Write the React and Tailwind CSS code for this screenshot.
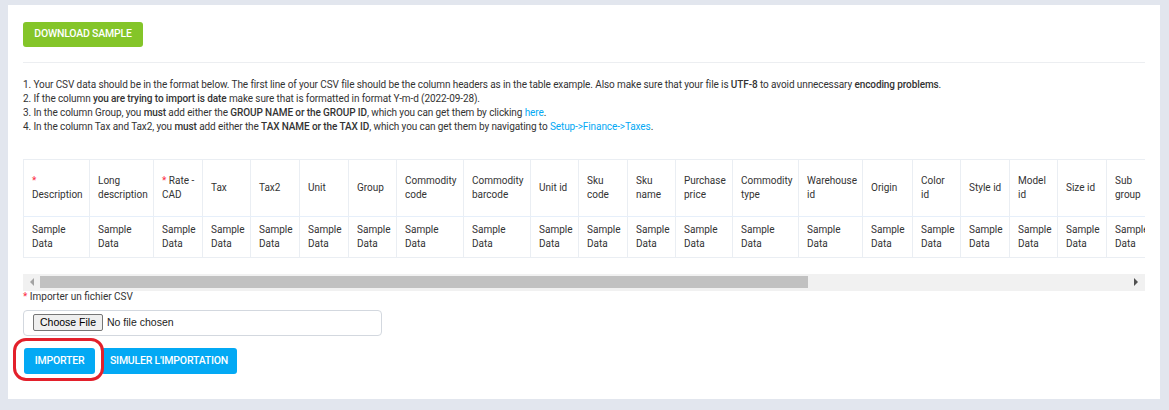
import React from "react";

const Star = () => <span className="text-[#fc2d42]">*</span>;

const cols = [
  { w: 66, h: <><Star /><br />Description</> },
  { w: 64, h: <>Long<br />description</> },
  { w: 49, h: <><Star /> Rate -<br />CAD</> },
  { w: 48, h: <>Tax</> },
  { w: 49, h: <>Tax2</> },
  { w: 49, h: <>Unit</> },
  { w: 48, h: <>Group</> },
  { w: 67, h: <>Commodity<br />code</> },
  { w: 67, h: <>Commodity<br />barcode</> },
  { w: 48, h: <>Unit id</> },
  { w: 49, h: <>Sku<br />code</> },
  { w: 48, h: <>Sku<br />name</> },
  { w: 57, h: <>Purchase<br />price</> },
  { w: 66, h: <>Commodity<br />type</> },
  { w: 64, h: <>Warehouse<br />id</> },
  { w: 50, h: <>Origin</> },
  { w: 48, h: <>Color<br />id</> },
  { w: 49, h: <>Style id</> },
  { w: 48, h: <>Model<br />id</> },
  { w: 49, h: <>Size id</> },
  { w: 52, h: <>Sub<br />group</> },
];

export default function App() {
  return (
    <div
      className="min-h-[410px] w-[1169px] bg-[#e2e6ee] pt-[5px] pl-[8px] pr-[9px] pb-[11px]"
      style={{ fontFamily: "Roboto, 'Liberation Sans', sans-serif" }}
    >
      <div className="bg-white h-[394px] pt-[15px] px-[15px] relative">
        <button className="h-[25px] w-[120px] rounded-[3px] bg-[#84c529] text-white text-[10.5px] font-medium uppercase tracking-[-0.2px] leading-none">
          Download Sample
        </button>
        <div className="mt-[15px] h-px bg-[#eceef1]" />
        <div className="mt-[15px] text-[10px] leading-[14px] text-[#333] tracking-[-0.1px]">
          <div>
            1. Your CSV data should be in the format below. The first line of your CSV file should be the column headers as in the table example. Also make sure that your file is <span className="font-medium">UTF-8</span> to avoid unnecessary <span className="font-medium">encoding problems</span>.
          </div>
          <div>
            2. If the column <span className="font-medium">you are trying to import is date</span> make sure that is formatted in format Y-m-d (2022-09-28).
          </div>
          <div>
            3. In the column Group, you <span className="font-medium">must</span> add either the <span className="font-medium">GROUP NAME or the GROUP ID</span>, which you can get them by clicking <span className="text-[#03a9f4]">here</span>.
          </div>
          <div>
            4. In the column Tax and Tax2, you <span className="font-medium">must</span> add either the <span className="font-medium">TAX NAME or the TAX ID</span>, which you can get them by navigating to <span className="text-[#03a9f4]">Setup-&gt;Finance-&gt;Taxes</span>.
          </div>
        </div>

        <div className="mt-[25px] w-[1122px] overflow-hidden">
          <table className="table-fixed border-collapse text-[10px] leading-[14px] text-[#333]" style={{ width: cols.reduce((a, c) => a + c.w, 0) }}>
            <colgroup>
              {cols.map((c, i) => (
                <col key={i} style={{ width: c.w }} />
              ))}
            </colgroup>
            <thead>
              <tr className="h-[57px]">
                {cols.map((c, i) => (
                  <th
                    key={i}
                    className="border border-[#eaeef3] border-b-[#e6effa] px-2 text-left font-normal align-middle whitespace-nowrap"
                  >
                    {c.h}
                  </th>
                ))}
              </tr>
            </thead>
            <tbody>
              <tr className="h-[41px]">
                {cols.map((c, i) => (
                  <td
                    key={i}
                    className="border border-[#eaeef3] px-2 align-middle whitespace-nowrap overflow-hidden"
                  >
                    Sample
                    <br />
                    Data
                  </td>
                ))}
              </tr>
            </tbody>
          </table>
          <div className="h-[16px]" />
          <div className="h-[17px] bg-[#f1f1f1] flex items-center">
            <div className="w-[17px] h-[17px] flex items-center justify-center">
              <svg width="5" height="8" viewBox="0 0 5 8">
                <polygon points="5,0 5,8 1,4" fill="#a3a3a3" />
              </svg>
            </div>
            <div className="w-[768px] h-[12px] bg-[#c1c1c1]" />
            <div className="flex-1" />
            <div className="w-[17px] h-[17px] flex items-center justify-center">
              <svg width="5" height="8" viewBox="0 0 5 8">
                <polygon points="0,0 0,8 4,4" fill="#505050" />
              </svg>
            </div>
          </div>
        </div>

        <div className="text-[10px] leading-[12px] text-[#333]">
          <span className="text-[#fc2d42]">*</span> Importer un fichier CSV
        </div>
        <div className="mt-[7px] w-[359px] h-[26px] border border-[#d3d8df] rounded-[4px] flex items-center pl-[9px]" style={{ fontFamily: "'Liberation Sans', Arial, sans-serif" }}>
          <span className="h-[17px] px-[6px] flex items-center border border-[#767676] rounded-[2px] bg-[#efefef] text-[10.5px] text-black">
            Choose File
          </span>
          <span className="ml-[4px] text-[10.5px] text-[#222]">No file chosen</span>
        </div>

        <div className="mt-[12px] flex gap-[6px] ml-[1px] relative">
          <button className="h-[26px] w-[71px] rounded-[3px] bg-[#03a9f4] text-white text-[10.5px] font-medium uppercase tracking-[-0.2px] leading-none">
            Importer
          </button>
          <button className="h-[26px] w-[136px] rounded-[3px] bg-[#03a9f4] text-white text-[10.5px] font-medium uppercase tracking-[-0.2px] leading-none">
            Simuler l'importation
          </button>
          <div className="absolute left-[-11px] top-[-10px] w-[91px] h-[43px] border-[3px] border-[#e3202b] rounded-[13px]" />
        </div>
      </div>
    </div>
  );
}
